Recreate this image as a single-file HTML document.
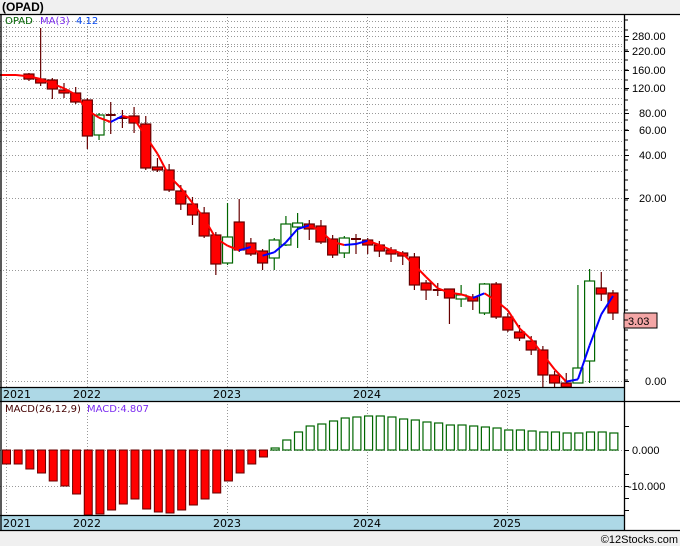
<!DOCTYPE html>
<html><head><meta charset="utf-8"><style>
body{margin:0;background:#f0f0f0;}
svg{display:block;font-family:"DejaVu Sans","Liberation Sans",sans-serif;}
</style></head><body>
<svg id="s" width="680" height="546" xmlns="http://www.w3.org/2000/svg">
<rect width="680" height="546" fill="#f0f0f0"/>
<rect x="0" y="14" width="680" height="517" fill="#fff"/>
<text x="2" y="11" font-size="12" font-weight="bold" font-family="Liberation Sans,sans-serif">(OPAD)</text>
<g id="grid" stroke="#999" stroke-dasharray="1,2" stroke-width="1"></g>
<rect x="0" y="387" width="624" height="14" fill="#add8e6"/>
<rect x="0" y="515" width="624" height="15" fill="#add8e6"/>
<g font-size="11" fill="#000">
<text x="3" y="398">2021</text><text x="73" y="398">2022</text><text x="213" y="398">2023</text><text x="353" y="398">2024</text><text x="493" y="398">2025</text>
<text x="3" y="527">2021</text><text x="73" y="527">2022</text><text x="213" y="527">2023</text><text x="353" y="527">2024</text><text x="493" y="527">2025</text>
</g>
<g id="c"></g>
<g stroke="#000" stroke-width="1.3" fill="none">
<line x1="0" y1="14.5" x2="680" y2="14.5"/>
<line x1="0" y1="387.5" x2="624" y2="387.5"/>
<line x1="0" y1="401.5" x2="680" y2="401.5"/>
<line x1="0" y1="515.5" x2="624" y2="515.5"/>
<line x1="0" y1="530.5" x2="680" y2="530.5"/>
<line x1="624.5" y1="14" x2="624.5" y2="530"/>
<line x1="1" y1="14" x2="1" y2="530"/>
</g>
<g font-size="11" fill="#000" font-family="Liberation Sans,sans-serif">
<text x="632" y="40">280.00</text><text x="632" y="55">220.00</text><text x="632" y="74">160.00</text><text x="632" y="92">120.00</text><text x="639" y="117">80.00</text><text x="639" y="134">60.00</text><text x="639" y="159">40.00</text><text x="639" y="202">20.00</text><text x="645" y="385">0.00</text>
<text x="632" y="454">0.000</text><text x="628" y="490">-10.000</text>
</g>
<rect x="624" y="313" width="33" height="15" fill="#f4a6a6" stroke="#000"/>
<text x="628" y="325" font-size="11" font-family="Liberation Sans,sans-serif">3.03</text>
<text x="5" y="24" font-size="10" fill="#006400">OPAD</text>
<text x="40" y="24" font-size="10" fill="#7b2cf0">MA(3)</text>
<text x="76" y="24" font-size="10" fill="#0044ee">4.12</text>
<text x="5" y="412" font-size="10" fill="#400">MACD(26,12,9)</text>
<text x="87" y="412" font-size="10" fill="#7b2cf0">MACD:4.807</text>
<text x="678" y="543" font-size="11" text-anchor="end" font-family="Liberation Sans,sans-serif">©12Stocks.com</text>
</svg>
<script>
var NS="http://www.w3.org/2000/svg";
function el(p,t,a){var e=document.createElementNS(NS,t);for(var k in a)e.setAttribute(k,a[k]);p.appendChild(e);return e;}
var g=document.getElementById('grid'),c=document.getElementById('c');
[36,51,70,88,113,130,155,198,381,21,27,31,44,46,59,62,79,98,104,122,141,171,270].forEach(function(y){el(g,'line',{x1:0,y1:y+.5,x2:624,y2:y+.5});});
[450,486].forEach(function(y){el(g,'line',{x1:0,y1:y+.5,x2:624,y2:y+.5});});
[6,87,227,367,507].forEach(function(x){el(g,'line',{x1:x+.5,y1:14,x2:x+.5,y2:530});});
var s=document.getElementById('s');
for(var y=20;y<385;y+=10){el(s,'line',{x1:624,y1:y,x2:628,y2:y,stroke:'#000'});}
[36,51,70,88,113,130,155,198,381,426,450,474,486,498,510].forEach(function(y){el(s,'line',{x1:624,y1:y+.5,x2:629,y2:y+.5,stroke:'#000'});});
var d={2:['r',74,79,73,81],3:['r',79,83,28,86],4:['r',80,89,78,99],5:['r',90,93,83,98],6:['r',93,102,87,104],7:['r',100,136,98,149],8:['g',115,135,113,140],9:['x',115,116,102,134],10:['x',118,119,110,128],11:['r',116,123,107,133],12:['r',124,168,116,170],13:['r',167,170,158,172],14:['r',170,190,164,192],15:['r',191,204,185,210],16:['r',204,215,197,225],17:['r',213,236,207,238],18:['r',235,264,232,275],19:['g',237,263,203,265],20:['r',222,250,199,252],21:['r',243,254,238,256],22:['r',251,263,249,270],23:['g',240,258,238,270],24:['g',224,245,216,246],25:['g',223,227,213,248],26:['r',224,229,220,240],27:['r',226,242,220,244],28:['r',239,255,235,258],29:['g',238,253,236,258],30:['x',239,240,234,254],31:['r',240,245,238,254],32:['r',245,251,241,257],33:['r',250,254,247,262],34:['r',253,256,251,265],35:['r',257,285,253,290],36:['r',283,290,280,300],37:['x',290,291,283,296],38:['r',289,298,289,324],39:['g',295,299,285,307],40:['r',297,301,294,310],41:['g',284,313,283,315],42:['r',284,317,282,319],43:['r',317,330,313,332],44:['r',332,338,325,341],45:['r',341,350,336,355],46:['r',350,375,346,387],47:['r',375,383,371,387],48:['r',383,387,373,388],49:['g',368,383,285,383],50:['g',281,361,269,383],51:['r',288,294,272,301],52:['r',293,313,290,320]};
function X(i){return 5.6+11.68*i;}
var closes=[75,75];
for(var i=2;i<=52;i++){var v=d[i],x=X(i);
 var wc=v[0]=='g'?'#060':'#600';
 el(c,'line',{x1:x,y1:v[3],x2:x,y2:Math.min(v[4],387),stroke:wc,'stroke-width':1.2});
 if(v[0]=='x'){el(c,'line',{x1:x-5,y1:v[1],x2:x+5,y2:v[1],stroke:wc,'stroke-width':2});closes.push(v[1]);}
 else if(v[0]=='g'){el(c,'rect',{x:x-5,y:v[1],width:10,height:v[2]-v[1],fill:'#fff',stroke:'#060','stroke-width':1.2});closes.push(v[1]);}
 else{el(c,'rect',{x:x-5,y:v[1],width:10,height:Math.min(v[2],387)-v[1],fill:'#f00',stroke:'#600','stroke-width':1.2});closes.push(v[2]);}
}
var prev=75;
for(var i=2;i<=52;i++){var m=(closes[i]+closes[i-1]+closes[i-2])/3;if(i<4)m=Math.max(m,75+(i-2)*3);var x=X(i),px=i==2?16:X(i-1);
 el(c,'line',{x1:px,y1:prev,x2:x,y2:m,stroke:m<prev?'#00f':'#f00','stroke-width':2});prev=m;}
el(c,'line',{x1:0,y1:75,x2:16,y2:75,stroke:'#f00','stroke-width':2});
var red=[464,464,469,473,481,486,494,515,514,510,504,499,509,512,513,510,505,499,493,481,473,464,457];
var grn=[448,440,432,426,424,421,418,417,416,416,417,419,420,422,423,425,425,426,427,428,430,430,431,432,432,433,433,432,432,433];
for(var i=0;i<=52;i++){var x=6.5+11.68*i;
 if(i<red.length)el(c,'rect',{x:x-4,y:450,width:8,height:Math.min(red[i],515)-450,fill:'#f00',stroke:'#600'});
 else{var t=grn[i-red.length];el(c,'rect',{x:x-4,y:t,width:8,height:450-t,fill:'#fff',stroke:'#060','stroke-width':1.2});}
}
</script>
</body></html>
